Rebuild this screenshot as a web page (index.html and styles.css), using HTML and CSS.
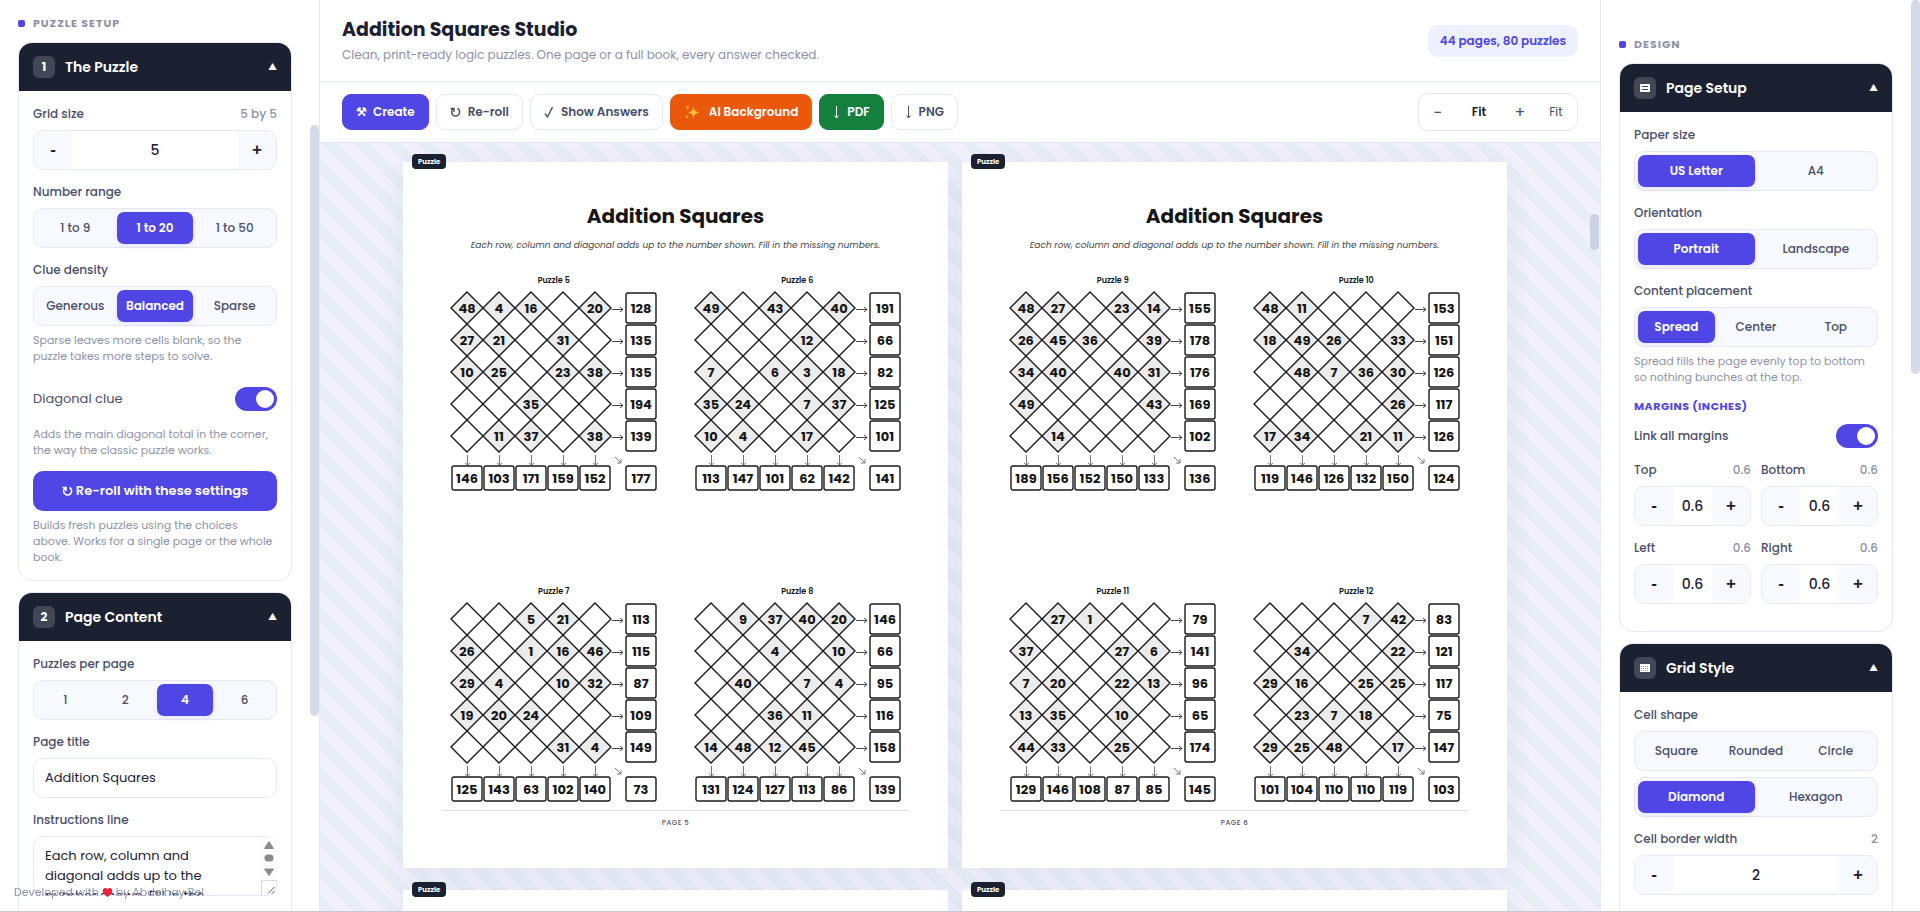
FILE: index.html
```html
<!DOCTYPE html>
<html lang="en">
<head>
<meta charset="utf-8">
<title>Addition Squares Studio</title>
<link rel="stylesheet" href="styles.css">
</head>
<body>
<div class="app">
  <aside class="panel panel-left">
    <h2 class="panel-label">Puzzle setup</h2>
    <section class="card">
      <button class="card-head"><span class="badge">1</span><span class="card-title">The Puzzle</span><span class="caret">▲</span></button>
      <div class="card-body">
        <div class="field">
          <div class="field-head"><label for="size">Grid size</label><span class="value">5 by 5</span></div>
          <div class="stepper"><button>-</button><input id="size" value="5"><button>+</button></div>
        </div>
        <div class="field">
          <div class="field-head"><span>Number range</span></div>
          <div class="seg"><button>1 to 9</button><button class="on">1 to 20</button><button>1 to 50</button></div>
        </div>
        <div class="field">
          <div class="field-head"><span>Clue density</span></div>
          <div class="seg"><button>Generous</button><button class="on">Balanced</button><button>Sparse</button></div>
          <p class="hint">Sparse leaves more cells blank, so the puzzle takes more steps to solve.</p>
        </div>
        <div class="switch-row switch-row-tall"><label for="diag">Diagonal clue</label><input class="switch" type="checkbox" id="diag" checked></div>
        <p class="hint hint-block">Adds the main diagonal total in the corner, the way the classic puzzle works.</p>
        <button class="wide-btn"><svg class="turn" viewBox="0 0 11 12" aria-hidden="true"><path d="M7.500 2.500A4 4 0 1 1 3 3M.5 2.500H4V6" fill="none" stroke="currentColor" stroke-width="1.600"/></svg>Re-roll with these settings</button>
        <p class="hint">Builds fresh puzzles using the choices above. Works for a single page or the whole book.</p>
      </div>
    </section>
    <section class="card">
      <button class="card-head"><span class="badge">2</span><span class="card-title">Page Content</span><span class="caret">▲</span></button>
      <div class="card-body">
        <div class="field">
          <div class="field-head"><span>Puzzles per page</span></div>
          <div class="seg"><button>1</button><button>2</button><button class="on">4</button><button>6</button></div>
        </div>
        <div class="field">
          <div class="field-head"><label for="title">Page title</label></div>
          <input class="text" id="title" value="Addition Squares">
        </div>
        <div class="field">
          <div class="field-head"><label for="instr">Instructions line</label></div>
          <div class="area-wrap">
            <textarea class="text area" id="instr">Each row, column and diagonal adds up to the number shown. Fill in the missing numbers.</textarea>
            <svg class="area-scroll" viewBox="0 0 16 58" aria-hidden="true"><path d="M0 0H16V43H0Z" fill="#fcfcfc"/><path d="M8 4.500L12.500 11.500H3.500Z" fill="#8b8b8b" stroke="#8b8b8b" stroke-linejoin="round"/><rect x="3.500" y="17.500" width="9" height="7" rx="3.500" fill="#8b8b8b"/><path d="M8 38.500L12.500 32H3.500Z" fill="#8b8b8b" stroke="#8b8b8b" stroke-linejoin="round"/><path d="M.5 58V43.500H16" fill="none" stroke="#d8d8dc"/><path d="M7 56.500L13.500 50M11 56.500L13.500 54" stroke="#555"/></svg>
          </div>
        </div>
      </div>
    </section>
    <span class="thumb"></span>
  </aside>

  <main class="main">
    <header class="top">
      <div>
        <h1>Addition Squares Studio</h1>
        <p>Clean, print-ready logic puzzles. One page or a full book, every answer checked.</p>
      </div>
      <span class="pill">44 pages, 80 puzzles</span>
    </header>
    <div class="toolbar">
      <button class="btn btn-primary"><span class="ico">⚒</span>Create</button>
      <button class="btn"><svg class="turn" viewBox="0 0 11 12" aria-hidden="true"><path d="M7.500 2.500A4 4 0 1 1 3 3M.5 2.500H4V6" fill="none" stroke="currentColor" stroke-width="1.500"/></svg>Re-roll</button>
      <button class="btn"><svg class="tick" viewBox="0 0 10 12" aria-hidden="true"><path d="M1 7.500L3.500 11L8.500 1" fill="none" stroke="currentColor" stroke-width="1.400"/></svg>Show Answers</button>
      <button class="btn btn-orange">
        <svg class="spark" viewBox="0 0 18 16" aria-hidden="true"><path fill="#fdc02f" d="M9.500 1.500C10 6 11 7.500 15 8.500C11 9.500 10 11 9.500 15.500C9 11 8 9.500 4 8.500C8 7.500 9 6 9.500 1.500ZM3.500 1C3.700 2.600 4.200 3.200 5.800 3.500C4.200 3.800 3.700 4.400 3.500 6C3.300 4.400 2.800 3.800 1.200 3.500C2.800 3.200 3.300 2.600 3.500 1ZM3 10.500C3.200 12 3.600 12.500 5 12.800C3.600 13.100 3.200 13.600 3 15C2.800 13.600 2.400 13.100 1 12.800C2.400 12.500 2.800 12 3 10.500Z"/></svg>AI Background</button>
      <button class="btn btn-green"><svg class="down" viewBox="0 0 7 16" aria-hidden="true"><path d="M3.500 2V14M1.500 11.500L3.500 14L5.500 11.500" fill="none" stroke="currentColor"/></svg>PDF</button>
      <button class="btn"><svg class="down" viewBox="0 0 7 16" aria-hidden="true"><path d="M3.500 2V14M1.500 11.500L3.500 14L5.500 11.500" fill="none" stroke="currentColor"/></svg>PNG</button>
      <div class="zoom"><button class="sign">−</button><output>Fit</output><button class="sign">+</button><button>Fit</button></div>
    </div>
    <div class="canvas">
      <div class="sheets" id="sheets"></div>
      <span class="thumb"></span>
    </div>
  </main>

  <aside class="panel panel-right">
    <h2 class="panel-label">Design</h2>
    <section class="card">
      <button class="card-head"><span class="badge"><svg viewBox="0 0 10 10" aria-hidden="true"><path fill="#fff" d="M0 1H10V9H0Z"/><path stroke="#424756" d="M2 3.500H8M2 6.500H8"/></svg></span><span class="card-title">Page Setup</span><span class="caret">▲</span></button>
      <div class="card-body">
        <div class="field">
          <div class="field-head"><span>Paper size</span></div>
          <div class="seg"><button class="on">US Letter</button><button>A4</button></div>
        </div>
        <div class="field">
          <div class="field-head"><span>Orientation</span></div>
          <div class="seg"><button class="on">Portrait</button><button>Landscape</button></div>
        </div>
        <div class="field">
          <div class="field-head"><span>Content placement</span></div>
          <div class="seg"><button class="on">Spread</button><button>Center</button><button>Top</button></div>
          <p class="hint">Spread fills the page evenly top to bottom so nothing bunches at the top.</p>
        </div>
        <h3 class="sub">Margins (inches)</h3>
        <div class="switch-row"><label for="link">Link all margins</label><input class="switch" type="checkbox" id="link" checked></div>
        <div class="pair">
          <div class="field"><div class="field-head"><label for="mt">Top</label><span class="value">0.6</span></div><div class="stepper"><button>-</button><input id="mt" value="0.6"><button>+</button></div></div>
          <div class="field"><div class="field-head"><label for="mb">Bottom</label><span class="value">0.6</span></div><div class="stepper"><button>-</button><input id="mb" value="0.6"><button>+</button></div></div>
          <div class="field"><div class="field-head"><label for="ml">Left</label><span class="value">0.6</span></div><div class="stepper"><button>-</button><input id="ml" value="0.6"><button>+</button></div></div>
          <div class="field"><div class="field-head"><label for="mr">Right</label><span class="value">0.6</span></div><div class="stepper"><button>-</button><input id="mr" value="0.6"><button>+</button></div></div>
        </div>
      </div>
    </section>
    <section class="card">
      <button class="card-head"><span class="badge"><svg viewBox="0 0 10 10" aria-hidden="true"><path fill="#fff" d="M0 1H10V9H0Z"/><path stroke="#9aa0b4" stroke-dasharray="1 1" d="M1 3.500H9M1 5.500H9M1 7.500H9"/></svg></span><span class="card-title">Grid Style</span><span class="caret">▲</span></button>
      <div class="card-body">
        <div class="field">
          <div class="field-head"><span>Cell shape</span></div>
          <div class="seg"><button>Square</button><button>Rounded</button><button>Circle</button></div>
          <div class="seg seg-next"><button class="on">Diamond</button><button>Hexagon</button></div>
        </div>
        <div class="field">
          <div class="field-head"><label for="bw">Cell border width</label><span class="value">2</span></div>
          <div class="stepper"><button>-</button><input id="bw" value="2"><button>+</button></div>
        </div>
      </div>
    </section>
    <span class="thumb"></span>
  </aside>
</div>
<footer class="credit">Developed with <svg viewBox="0 0 12 12" aria-label="love"><path fill="#f0223a" d="M6 11C3 8.500 .8 6.600 .8 4C.8 2.300 2 1.200 3.500 1.200C4.600 1.200 5.500 1.800 6 2.800C6.500 1.800 7.400 1.200 8.500 1.200C10 1.200 11.200 2.300 11.200 4C11.200 6.600 9 8.500 6 11Z"/></svg> by Abdelhay Bel</footer>
<script src="app.js"></script>
</body>
</html>
```
FILE: app.js
```js
// Each puzzle: rows of clues (0 = blank), row totals, column totals, diagonal total.
const puzzles = {
  5: ["48 4 16 0 20|27 21 0 31 0|10 25 0 23 38|0 0 35 0 0|0 11 37 0 38", "128 135 135 194 139", "146 103 171 159 152", 177],
  6: ["49 0 43 0 40|0 0 0 12 0|7 0 6 3 18|35 24 0 7 37|10 4 0 17 0", "191 66 82 125 101", "113 147 101 62 142", 141],
  7: ["0 0 5 21 0|26 0 1 16 46|29 4 0 10 32|19 20 24 0 0|0 0 0 31 4", "113 115 87 109 149", "125 143 63 102 140", 73],
  8: ["0 9 37 40 20|0 0 4 0 10|0 40 0 7 4|0 0 36 11 0|14 48 12 45 0", "146 66 95 116 158", "131 124 127 113 86", 139],
  9: ["48 27 0 23 14|26 45 36 0 39|34 40 0 40 31|49 0 0 0 43|0 14 0 0 0", "155 178 176 169 102", "189 156 152 150 133", 136],
  10: ["48 11 0 0 0|18 49 26 0 33|0 48 7 36 30|0 0 0 0 26|17 34 0 21 11", "153 151 126 117 126", "119 146 126 132 150", 124],
  11: ["0 27 1 0 0|37 0 0 27 6|7 20 0 22 13|13 35 0 10 0|44 33 0 25 0", "79 141 96 65 174", "129 146 108 87 85", 145],
  12: ["0 0 0 7 42|0 34 0 0 22|29 16 0 25 25|0 23 7 18 0|29 25 48 0 17", "83 121 117 75 147", "101 104 110 110 119", 103]
};

const PITCH = 32;
const label = (x, y, n) => `<text x="${x}" y="${y}">${n}</text>`;
const box = (x, y, h) => `<rect class="total" x="${x}" y="${y}" width="30" height="${h}" rx="2"/>`;

function drawPuzzle(no) {
  const [cells, rows, cols, diag] = puzzles[no];
  let s = "";
  cells.split("|").forEach((line, r) => line.split(" ").forEach((n, c) => {
    const x = 16 + c * PITCH, y = 18 + r * PITCH;
    s += `<path class="${+n ? "clue" : "blank"}" d="M${x} ${y - 16}L${x + 16} ${y}L${x} ${y + 16}L${x - 16} ${y}Z"/>`;
    if (+n) s += label(x, y + 5, n);
  }));
  rows.split(" ").forEach((n, r) => {
    const y = 19 + r * PITCH;
    s += `<path class="arrow" d="M161 ${y}.5H172M169 ${y - 2}L172 ${y}.5L169 ${y + 3}"/>`;
    s += box(175, r * PITCH + 3, 30) + label(190, y + 4, n);
  });
  cols.split(" ").forEach((n, c) => {
    const x = 16 + c * PITCH;
    s += `<path class="arrow faint" d="M${x}.5 165V175M${x - 2} 173L${x}.5 175L${x + 3} 173"/>`;
    s += box(x - 15, 176, 24) + label(x, 193, n);
  });
  s += `<path class="arrow faint" d="M164 167L170 173M166 173H170V169"/>`;
  s += box(175, 176, 24) + label(190, 193, diag);
  return `<figure class="puzzle"><figcaption>Puzzle ${no}</figcaption><svg viewBox="0 0 205 201">${s}</svg></figure>`;
}

function drawSheet(page, list) {
  return `<article class="sheet"><span class="tag">Puzzle</span><h2>Addition Squares</h2>
    <p>Each row, column and diagonal adds up to the number shown. Fill in the missing numbers.</p>
    <div class="grid">${list.map(drawPuzzle).join("")}</div>
    <div class="folio">Page ${page}</div></article>`;
}

const emptySheet = `<article class="sheet"><span class="tag">Puzzle</span></article>`;
document.getElementById("sheets").innerHTML =
  drawSheet(5, [5, 6, 7, 8]) + drawSheet(6, [9, 10, 11, 12]) + emptySheet + emptySheet;
```
FILE: styles.css
```css
:root {
  --ink: #1c2132;
  --label: #4a5068;
  --muted: #8d92a8;
  --line: #e6e8f3;
  --soft: #f8f9ff;
  --accent: #4f46e5;
}
* { box-sizing: border-box; margin: 0; }
body {
  height: 100vh;
  overflow: hidden;
  font-family: Poppins, Inter, sans-serif;
  font-size: 13px;
  color: var(--ink);
  background: #fff;
  border-bottom: 1px solid #c9c9cf;
}
button, input, textarea, output { font: inherit; color: inherit; }
button { border: 0; background: none; padding: 0; cursor: pointer; white-space: nowrap; }
.app { display: grid; grid-template-columns: 320px 1fr 320px; height: 100%; }

.panel { position: relative; overflow: hidden; padding: 0 27px 0 18px; }
.panel-left { border-right: 1px solid var(--line); padding-top: 14px; }
.panel-right { border-left: 1px solid var(--line); padding-top: 35px; }
.panel-label {
  display: flex; align-items: center; gap: 8px;
  height: 18px; margin-bottom: 10px;
  font-size: 11px; font-weight: 700; letter-spacing: 1px;
  text-transform: uppercase; color: var(--muted);
}
.panel-label::before { content: ""; width: 7px; height: 7px; border-radius: 2px; background: var(--accent); }
.thumb { position: absolute; right: 0; width: 9px; border-radius: 5px; background: #d6d9e8; }
.panel-left .thumb { top: 125px; height: 591px; }
.panel-right .thumb { top: 0; height: 374px; }

.card { border: 1px solid var(--line); border-radius: 14px; overflow: hidden; margin-bottom: 11px; background: #fff; }
.card-head { display: flex; align-items: center; gap: 10px; width: 100%; height: 48px; padding: 0 14px; background: var(--ink); color: #fff; }
.badge { display: grid; place-items: center; width: 22px; height: 22px; border-radius: 6px; background: #424756; font-size: 12px; font-weight: 700; }
.badge svg { width: 10px; height: 10px; }
.card-title { flex: 1; text-align: left; font-size: 14px; font-weight: 600; }
.caret { font-size: 9px; }
.card-body { padding: 13px 14px 15px; }
.field { margin-bottom: 12px; }
.field-head { display: flex; justify-content: space-between; align-items: center; height: 20px; margin-bottom: 6px; font-size: 12px; font-weight: 500; color: var(--label); }
.value { color: var(--muted); }
.seg { display: flex; gap: 3px; height: 40px; padding: 3px; border: 1px solid var(--line); border-radius: 10px; background: var(--soft); }
.seg button { flex: 1 1 0; border-radius: 7px; font-size: 12px; font-weight: 500; color: var(--label); }
.seg .on { background: var(--accent); color: #fff; font-weight: 600; box-shadow: 0 2px 6px #4f46e51f; }
.seg-next { margin-top: 6px; }
.stepper { display: flex; height: 40px; border: 1px solid var(--line); border-radius: 10px; overflow: hidden; }
.stepper button { flex: 0 0 38px; background: var(--soft); font-family: "Liberation Sans", sans-serif; font-size: 17px; font-weight: 700; }
.stepper input { flex: 1; min-width: 0; border: 0; padding: 0; text-align: center; font-size: 14px; font-weight: 500; }
.hint { margin-top: 6px; font-size: 11px; line-height: 16px; color: var(--muted); }
.hint-block { margin: 0 0 13px; }
.switch-row { display: flex; justify-content: space-between; align-items: center; height: 24px; margin-bottom: 12px; font-size: 12px; font-weight: 500; color: var(--label); }
.switch-row-tall { height: 46px; margin: 11px 0 4px; font-size: 13px; font-weight: 400; }
.switch { appearance: none; width: 42px; height: 24px; padding: 3px; border-radius: 12px; background: var(--accent); display: flex; justify-content: flex-end; }
.switch::before { content: ""; width: 18px; height: 18px; border-radius: 50%; background: #fff; }
.wide-btn { display: flex; align-items: center; justify-content: center; gap: 3px; width: 100%; height: 40px; border-radius: 10px; background: var(--accent); color: #fff; font-size: 13px; font-weight: 600; }
.text { display: block; width: 100%; height: 40px; padding: 0 11px; border: 1px solid var(--line); border-radius: 10px; background: #fff; font-size: 13px; outline: 0; }
.area-wrap { position: relative; }
.area { height: 60px; padding: 9px 40px 0 11px; line-height: 20px; resize: none; overflow: hidden; }
.area-scroll { position: absolute; top: 1px; right: 0; width: 16px; height: 58px; }
.sub { height: 18px; margin: 2px 0 9px; font-size: 11px; line-height: 18px; letter-spacing: 0.5px; font-weight: 700; text-transform: uppercase; color: var(--accent); }
.pair { display: grid; grid-template-columns: repeat(2, minmax(0, 1fr)); column-gap: 10px; }

.main { display: flex; flex-direction: column; min-width: 0; min-height: 0; }
.top { display: flex; justify-content: space-between; align-items: center; height: 82px; padding: 0 22px; border-bottom: 1px solid var(--line); }
.top h1 { font-size: 19px; line-height: 28px; font-weight: 700; }
.top p { margin-top: 1px; font-size: 12px; line-height: 20px; color: var(--muted); }
.pill { padding: 0 12px; border-radius: 10px; background: #eef0fe; color: var(--accent); font-size: 12px; line-height: 32px; font-weight: 600; white-space: nowrap; }
.toolbar { display: flex; align-items: center; gap: 7px; height: 61px; padding: 0 22px; border-bottom: 1px solid var(--line); }
.btn { display: flex; align-items: center; gap: 7px; height: 36px; padding: 0 13px; border: 1px solid var(--line); border-radius: 9px; background: #fff; color: var(--label); font-size: 12px; font-weight: 600; }
.ico { width: 10px; text-align: center; }
.turn { width: 11px; height: 12px; }
.tick { width: 10px; height: 12px; }
.spark { width: 18px; height: 16px; }
.down { width: 7px; height: 16px; }
.btn-primary, .btn-orange, .btn-green { color: #fff; }
.btn-primary { background: var(--accent); border-color: var(--accent); }
.btn-orange { background: #ea580c; border-color: #ea580c; }
.btn-green { background: #15803d; border-color: #15803d; }
.zoom { display: flex; align-items: center; height: 38px; margin-left: auto; padding-left: 4px; border: 1px solid var(--line); border-radius: 10px; font-size: 12px; color: var(--label); }
.zoom button { width: 42px; height: 28px; }
.zoom .sign { width: 30px; font-size: 16px; }
.zoom output { width: 52px; text-align: center; font-weight: 600; color: var(--ink); }

.canvas {
  position: relative; flex: 1; min-height: 0; overflow: hidden;
  padding: 19px 10px 0 0;
  background: linear-gradient(45deg, #e9edf6 25%, #f0f1fb 25% 50%, #e9edf6 50% 75%, #f0f1fb 75%) 0 0 / 32px 32px;
}
.canvas .thumb { top: 71px; height: 36px; right: 1px; background: #cdd1e4; }
.sheets { display: grid; grid-template-columns: 545px 545px; gap: 22px 14px; justify-content: center; }
.sheet { position: relative; aspect-ratio: 545 / 705; padding: 39px; background: #fff; color: #161616; box-shadow: 0 6px 28px #3c468c14; text-align: center; }
.tag { position: absolute; left: 9px; top: -8px; padding: 0 6px; border-radius: 4px; background: var(--ink); color: #fff; font-size: 7px; line-height: 15px; font-weight: 700; }
.sheet h2 { font-size: 20px; line-height: 30px; font-weight: 700; }
.sheet p { margin-top: 7px; font-size: 9px; line-height: 14px; font-style: italic; color: #444; white-space: nowrap; }
.grid { display: grid; grid-template-columns: 1fr 1fr; gap: 93px 20px; margin-top: 22px; }
.puzzle figcaption { height: 14px; font-size: 8px; line-height: 14px; font-weight: 600; }
.puzzle svg { display: block; width: 205px; height: 201px; margin: 2px auto 1px; overflow: visible; }
.puzzle text { font-size: 13px; font-weight: 700; text-anchor: middle; fill: #161616; }
.blank, .clue, .total { stroke: #1a1a1a; stroke-width: 1.4px; fill: #fff; }
.blank { fill: none; }
.clue { fill: #ececec; }
.arrow { fill: none; stroke: #444; stroke-width: 1px; }
.faint { stroke: #777; }
.folio { margin-top: 7px; border-top: 1px solid #ddd; padding-top: 6px; font-size: 7px; line-height: 12px; letter-spacing: 0.5px; text-transform: uppercase; font-weight: 500; color: #555; }

.credit { position: fixed; left: 14px; bottom: 11px; display: flex; align-items: center; gap: 3px; font-size: 11px; line-height: 18px; color: #8d92a8; }
.credit svg { width: 11px; height: 11px; }
```
